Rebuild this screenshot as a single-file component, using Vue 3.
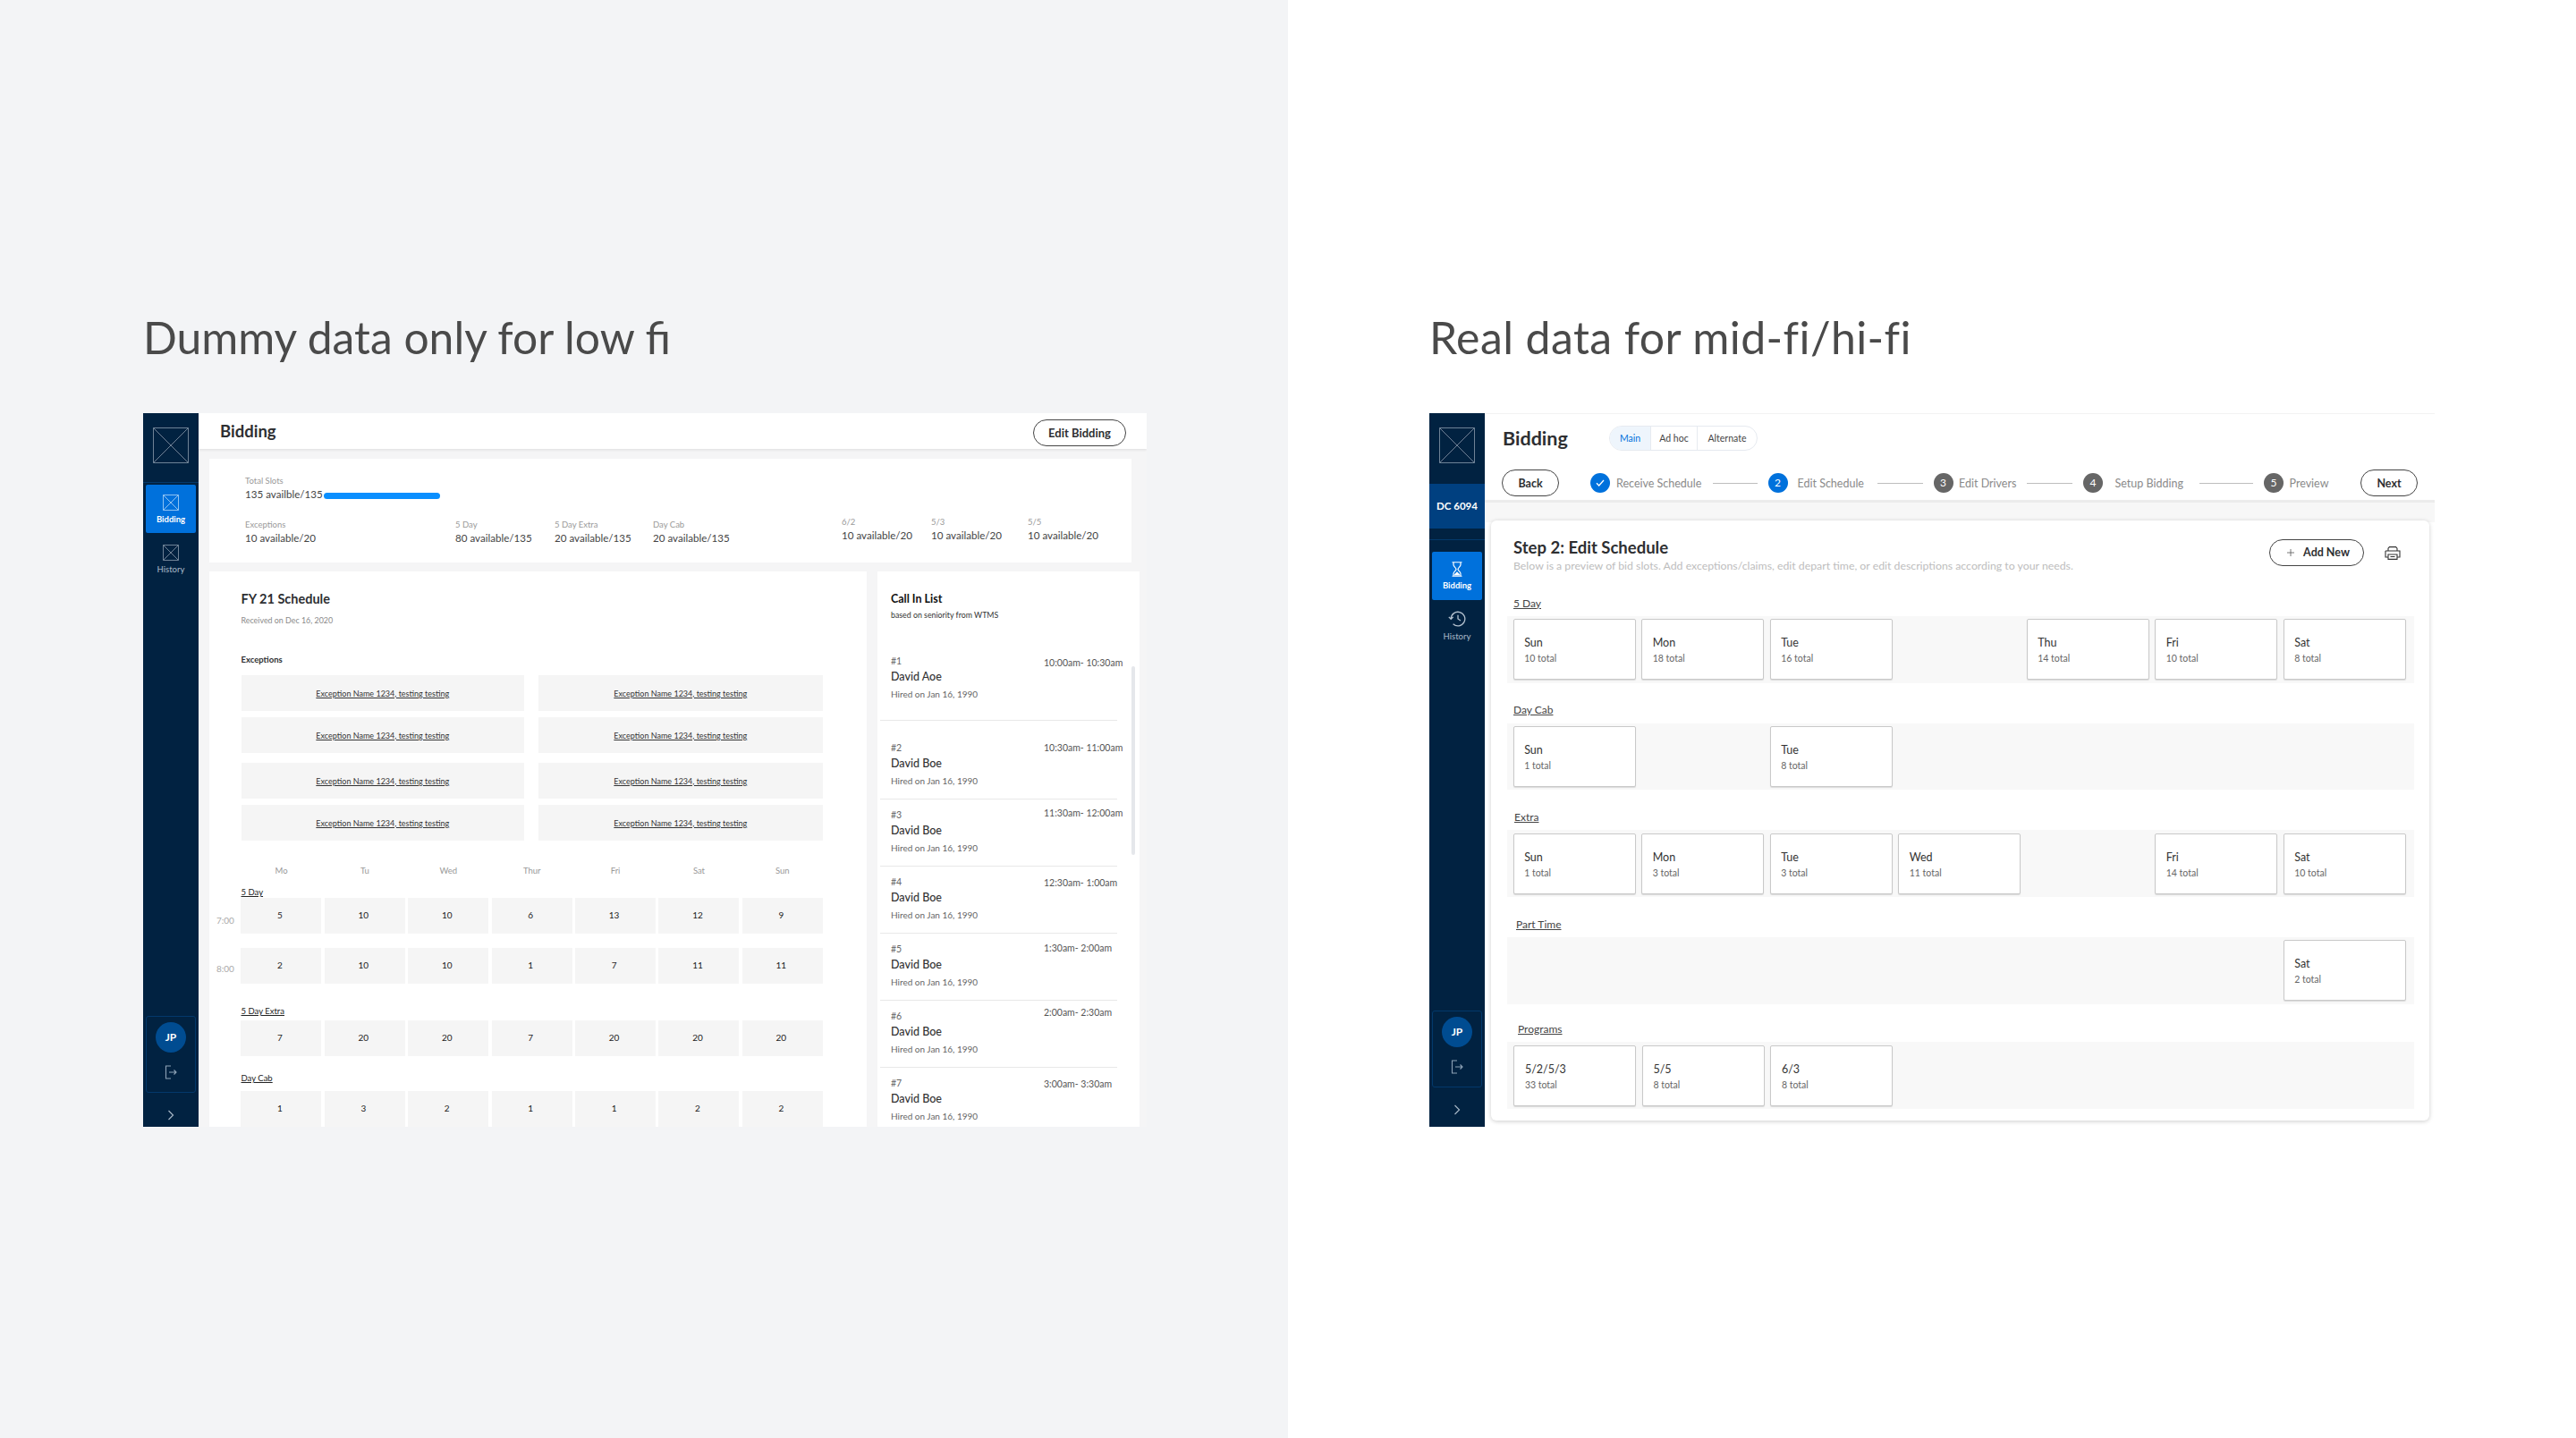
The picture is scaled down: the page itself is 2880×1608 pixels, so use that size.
<script setup>
const summary = [
  { label: '5 Day', value: '80 available/135' },
  { label: '5 Day Extra', value: '20 available/135' },
  { label: 'Day Cab', value: '20 available/135' },
  { label: '6/2', value: '10 available/20', up: true },
  { label: '5/3', value: '10 available/20', up: true },
  { label: '5/5', value: '10 available/20', up: true }
]

const exceptions = Array.from({ length: 8 }, () => 'Exception Name 1234, testing testing')
const days = ['Mo', 'Tu', 'Wed', 'Thur', 'Fri', 'Sat', 'Sun']

const callList = [
  { n: '#1', name: 'David Aoe', time: '10:00am- 10:30am', dy: 2 },
  { n: '#2', name: 'David Boe', time: '10:30am- 11:00am', dy: 0 },
  { n: '#3', name: 'David Boe', time: '11:30am- 12:00am', dy: -2 },
  { n: '#4', name: 'David Boe', time: '12:30am- 1:00am', dy: 1 },
  { n: '#5', name: 'David Boe', time: '1:30am- 2:00am', dy: -1 },
  { n: '#6', name: 'David Boe', time: '2:00am- 2:30am', dy: -4 },
  { n: '#7', name: 'David Boe', time: '3:00am- 3:30am', dy: 1 }
]

const steps = [
  { id: 1, label: 'Receive Schedule', done: true, gap: 7, w: 95, lineGap: 12.5, line: 50 },
  { id: 2, label: 'Edit Schedule', active: true, gap: 11, w: 73, lineGap: 16, line: 51 },
  { id: 3, label: 'Edit Drivers', gap: 6.5, w: 64, lineGap: 12, line: 51 },
  { id: 4, label: 'Setup Bidding', gap: 13.5, w: 75, lineGap: 19.5, line: 60 },
  { id: 5, label: 'Preview', gap: 6.5, w: 43 }
]

const d = (name, total) => ({ name, total })
const sections = [
  {
    title: '5 Day',
    inset: 7,
    slots: [d('Sun', 10), d('Mon', 18), d('Tue', 16), null, d('Thu', 14), d('Fri', 10), d('Sat', 8)]
  },
  { title: 'Day Cab', inset: 7, slots: [d('Sun', 1), null, d('Tue', 8)] },
  {
    title: 'Extra',
    inset: 8,
    slots: [d('Sun', 1), d('Mon', 3), d('Tue', 3), d('Wed', 11), null, d('Fri', 14), d('Sat', 10)]
  },
  { title: 'Part Time', inset: 10, slots: [null, null, null, null, null, null, d('Sat', 2)] },
  { title: 'Programs', inset: 12, programs: true, slots: [d('5/2/5/3', 33), d('5/5', 8), d('6/3', 8)] }
]
</script>

<template>
  <div class="page">
    <!-- low fi -->
    <section class="pane pane-left">
      <h1 class="heading">Dummy data only for low fi</h1>
      <div class="app">
        <aside class="side">
          <div class="side-logo">
            <svg class="logo" viewBox="0 0 40 40"><path d="M.5.5h39v39H.5zM.5.5l39 39M39.5.5l-39 39" /></svg>
          </div>
          <div class="nav-tile">
            <svg class="ph" viewBox="0 0 18 18"><path d="M.5.5h17v17H.5zM.5.5l17 17M17.5.5l-17 17" /></svg>
            <span>Bidding</span>
          </div>
          <div class="nav-item nav-item-low">
            <svg class="ph" viewBox="0 0 18 18"><path d="M.5.5h17v17H.5zM.5.5l17 17M17.5.5l-17 17" /></svg>
            <span>History</span>
          </div>
          <div class="side-foot">
            <div class="user-box">
              <div class="avatar">JP</div>
              <svg class="logout" viewBox="0 0 14 16"><path d="M7 1H1.5v14H7M5 8h8M10.5 5.5 13 8l-2.5 2.5" /></svg>
            </div>
            <svg class="chev" viewBox="0 0 8 12"><path d="M1.5 1 6.5 6l-5 5" /></svg>
          </div>
        </aside>

        <div class="main-low">
          <header class="low-head">
            <div class="low-title">Bidding</div>
            <button class="pill pill-edit">Edit Bidding</button>
          </header>

          <div class="summary">
            <div class="sum-label">Total Slots</div>
            <div class="sum-total">
              <span class="sum-value">135 availble/135</span>
              <span class="bar"></span>
            </div>
            <div class="sum-grid">
              <div>
                <div class="sum-label">Exceptions</div>
                <div class="sum-value">10 available/20</div>
              </div>
              <div v-for="s in summary" :key="s.label" :class="{ up: s.up }">
                <div class="sum-label">{{ s.label }}</div>
                <div class="sum-value">{{ s.value }}</div>
              </div>
            </div>
          </div>

          <div class="low-row">
            <div class="sched">
              <div class="sched-title">FY 21 Schedule</div>
              <div class="sched-sub">Received on Dec 16, 2020</div>
              <div class="sched-label">Exceptions</div>
              <div class="exc-grid">
                <div v-for="(e, i) in exceptions" :key="i" class="exc"><u>{{ e }}</u></div>
              </div>

              <div class="day-head">
                <span v-for="day in days" :key="day">{{ day }}</span>
              </div>

              <div class="grp-label first">5 Day</div>
              <div class="cells">
                <span class="time t1">7:00</span>
                <span v-for="(v, i) in [5, 10, 10, 6, 13, 12, 9]" :key="i" class="cell">{{ v }}</span>
              </div>
              <div class="cells cells-next">
                <span class="time t2">8:00</span>
                <span v-for="(v, i) in [2, 10, 10, 1, 7, 11, 11]" :key="i" class="cell">{{ v }}</span>
              </div>

              <div class="grp-label extra">5 Day Extra</div>
              <div class="cells">
                <span class="time"></span>
                <span v-for="(v, i) in [7, 20, 20, 7, 20, 20, 20]" :key="i" class="cell">{{ v }}</span>
              </div>

              <div class="grp-label cab">Day Cab</div>
              <div class="cells">
                <span class="time"></span>
                <span v-for="(v, i) in [1, 3, 2, 1, 1, 2, 2]" :key="i" class="cell">{{ v }}</span>
              </div>
            </div>

            <div class="calls">
              <div class="calls-title">Call In List</div>
              <div class="calls-sub">based on seniority from WTMS</div>
              <div class="call-list">
                <div v-for="c in callList" :key="c.n" class="call">
                  <div>
                    <div class="call-n">{{ c.n }}</div>
                    <div class="call-name">{{ c.name }}</div>
                    <div class="call-hired">Hired on Jan 16, 1990</div>
                  </div>
                  <div class="call-time" :style="{ marginTop: c.dy + 'px' }">{{ c.time }}</div>
                </div>
              </div>
              <div class="scroll-thumb"></div>
            </div>
          </div>
        </div>
      </div>
    </section>

    <!-- mid / hi fi -->
    <section class="pane pane-right">
      <h1 class="heading heading-real">Real data for mid-fi/hi-fi</h1>
      <div class="app">
        <aside class="side">
          <div class="side-logo side-logo-dc">
            <svg class="logo" viewBox="0 0 40 40"><path d="M.5.5h39v39H.5zM.5.5l39 39M39.5.5l-39 39" /></svg>
          </div>
          <div class="dc">DC 6094</div>
          <div class="side-rule"></div>
          <div class="nav-tile">
            <svg class="hourglass" viewBox="0 0 12 17">
              <path class="hg-line" d="M.5 .75h11M.5 16.25h11M2 1v2.6c0 2.2 3 3.2 3 4.9s-3 2.7-3 4.9V16M10 1v2.6c0 2.2-3 3.2-3 4.9s3 2.7 3 4.9V16" />
              <path class="hg-fill" d="M2.6 15.6c.3-1.8 2.2-2.8 3.4-4.3 1.2 1.5 3.1 2.5 3.4 4.3z" />
            </svg>
            <span>Bidding</span>
          </div>
          <div class="nav-item">
            <svg class="clock" viewBox="0 0 20 18">
              <path d="M3.2 9a7.8 7.8 0 1 1 2.4 5.7M.8 6.9 3.2 9.4l2.5-2.5M11 4.8V9l3 2" />
            </svg>
            <span>History</span>
          </div>
          <div class="side-foot side-foot-dc">
            <div class="user-box">
              <div class="avatar">JP</div>
              <svg class="logout" viewBox="0 0 14 16"><path d="M7 1H1.5v14H7M5 8h8M10.5 5.5 13 8l-2.5 2.5" /></svg>
            </div>
            <svg class="chev" viewBox="0 0 8 12"><path d="M1.5 1 6.5 6l-5 5" /></svg>
          </div>
        </aside>

        <div class="main-hi">
          <header class="hi-head">
            <div class="hi-top">
              <div class="hi-title">Bidding</div>
              <div class="tabs">
                <span class="tab tab-on">Main</span>
                <span class="tab tab-mid">Ad hoc</span>
                <span class="tab tab-end">Alternate</span>
              </div>
            </div>
            <div class="stepper">
              <button class="pill pill-back">Back</button>
              <div class="steps">
                <template v-for="s in steps" :key="s.id">
                  <span class="dot" :class="{ blue: s.done || s.active }">
                    <svg v-if="s.done" class="check" viewBox="0 0 10 8"><path d="M1 4.2 3.7 7 9 1" /></svg>
                    <template v-else>{{ s.id }}</template>
                  </span>
                  <span class="step-label" :style="{ marginLeft: s.gap + 'px', width: s.w + 'px' }">{{ s.label }}</span>
                  <span v-if="s.line" class="step-line" :style="{ marginLeft: s.lineGap + 'px', width: s.line + 'px' }"></span>
                </template>
              </div>
              <button class="pill pill-next">Next</button>
            </div>
          </header>

          <div class="hi-body">
            <div class="hi-card">
              <div class="card-head">
                <div>
                  <div class="card-title">Step 2: Edit Schedule</div>
                  <div class="card-sub">Below is a preview of bid slots. Add exceptions/claims, edit depart time, or edit descriptions according to your needs.</div>
                </div>
                <div class="card-actions">
                  <button class="pill pill-add">
                    <svg class="plus" viewBox="0 0 10 10"><path d="M5 0v10M0 5h10" /></svg>
                    Add New
                  </button>
                  <svg class="printer" viewBox="0 0 18 15">
                    <path d="M4 5V2.2L5.4.6h7.2L14 2.2V5M1 5h16v7h-3M4 12H1V5M4 9h10v5.4H4zM6.5 11.5h5" />
                  </svg>
                </div>
              </div>

              <div v-for="sec in sections" :key="sec.title" class="sec" :class="{ 'sec-programs': sec.programs }">
                <div class="sec-title" :style="{ paddingLeft: sec.inset + 'px' }"><u>{{ sec.title }}</u></div>
                <div class="band">
                  <template v-for="(slot, i) in sec.slots" :key="i">
                    <div v-if="slot" class="slot">
                      <div class="slot-name">{{ slot.name }}</div>
                      <div class="slot-total">{{ slot.total }} total</div>
                    </div>
                    <div v-else></div>
                  </template>
                </div>
              </div>
            </div>
          </div>
        </div>
      </div>
    </section>
  </div>
</template>

<style scoped>
.page {
  display: grid;
  grid-template-columns: 1440px 1440px;
  width: 2880px;
  height: 1608px;
  overflow: hidden;
  font-family: Lato, "Open Sans", sans-serif;
  color: #2e2f32;
}

.pane {
  padding-top: 347px;
  box-sizing: border-box;
}

.pane-left {
  background: #f3f4f6;
  padding-left: 160px;
}

.pane-right {
  background: #fff;
  padding-left: 158px;
}

.heading {
  margin: 0 0 55px;
  height: 60px;
  font-size: 49.8px;
  line-height: 60px;
  font-weight: 400;
  color: #4a4a4a;
  white-space: nowrap;
}

.heading-real {
  font-size: 50px;
  letter-spacing: 0.4px;
}

.app {
  display: flex;
  height: 798px;
  overflow: hidden;
}

.pane-left .app {
  width: 1122px;
}

.pane-right .app {
  width: 1124px;
}

/* sidebar */
.side {
  width: 62px;
  flex: none;
  display: flex;
  flex-direction: column;
  background: #012241;
  color: #fff;
}

.side-logo {
  height: 78px;
  display: flex;
  justify-content: center;
  padding-top: 16px;
  box-sizing: border-box;
  border-bottom: 1px solid #04396b;
  margin-bottom: 2px;
}

.side-logo-dc {
  border-bottom: 0;
  margin-bottom: 1px;
}

.logo {
  width: 40px;
  height: 40px;
}

.logo path,
.ph path {
  fill: none;
  stroke: #6f8296;
  stroke-width: 1;
}

.dc {
  height: 50px;
  line-height: 50px;
  text-align: center;
  background: #004080;
  font-size: 11.5px;
  font-weight: 700;
}

.side-rule {
  height: 1px;
  margin: 12px 0 13px;
  background: #04396b;
}

.nav-tile,
.nav-item {
  margin: 0 3px;
  height: 54px;
  box-sizing: border-box;
  display: flex;
  flex-direction: column;
  align-items: center;
  font-size: 9.5px;
  line-height: 12px;
}

.nav-tile {
  padding-top: 11px;
  background: #0071dc;
  border-radius: 2px;
  font-weight: 700;
}

.nav-tile .ph path {
  stroke: #8fc2f2;
}

.nav-item {
  padding-top: 12px;
  color: #9fb0c0;
  font-weight: 500;
}

.nav-item-low {
  padding-top: 13px;
}

.ph {
  width: 18px;
  height: 18px;
  margin-bottom: 4px;
}

.hourglass {
  width: 12px;
  height: 17px;
  margin-bottom: 4px;
}

.hg-line {
  fill: none;
  stroke: #fff;
  stroke-width: 1.2;
}

.hg-fill {
  fill: #fff;
}

.clock {
  width: 20px;
  height: 18px;
  margin-bottom: 5px;
}

.clock path {
  fill: none;
  stroke: #b5c2cf;
  stroke-width: 1.3;
}

.side-foot {
  margin-top: auto;
  display: flex;
  flex-direction: column;
  align-items: center;
}

.side-foot-dc {
  padding-bottom: 6px;
}

.user-box {
  width: 56px;
  height: 86px;
  box-sizing: border-box;
  border: 1px solid #03386b;
  border-radius: 3px;
  padding-top: 6px;
  display: flex;
  flex-direction: column;
  align-items: center;
}

.avatar {
  width: 34px;
  height: 34px;
  border-radius: 50%;
  background: #004c91;
  text-align: center;
  line-height: 34px;
  font-size: 12px;
  font-weight: 700;
}

.logout {
  width: 14px;
  height: 16px;
  margin-top: 14px;
}

.logout path {
  fill: none;
  stroke: #8fa3b7;
  stroke-width: 1.1;
}

.chev {
  width: 8px;
  height: 12px;
  margin: 19px 0 7px;
}

.chev path {
  fill: none;
  stroke: #a5b5c5;
  stroke-width: 1.2;
}

/* pills */
.pill {
  height: 30px;
  border: 1px solid #444;
  border-radius: 15px;
  background: #fff;
  font-family: inherit;
  font-weight: 700;
  font-size: 13px;
  color: #2e2f32;
  padding: 0;
  flex: none;
}

.pill-edit {
  width: 104px;
  margin-top: 4px;
}

.pill-back {
  width: 64px;
  font-size: 12.5px;
}

.pill-next {
  width: 64px;
  margin-left: auto;
  font-size: 12.5px;
}

.pill-add {
  width: 106px;
  display: flex;
  align-items: center;
  justify-content: center;
  gap: 10px;
  padding-left: 4px;
  font-size: 12.5px;
}

/* low fi main */
.main-low {
  flex: 1;
  min-width: 0;
  background: #f5f5f6;
}

.low-head {
  height: 40px;
  background: #fff;
  display: flex;
  align-items: center;
  justify-content: space-between;
  padding: 0 23px 0 24px;
  box-shadow: 0 1px 3px rgba(0, 0, 0, 0.1);
  position: relative;
}

.low-title {
  font-size: 18.5px;
  font-weight: 700;
}

.summary {
  width: 1031px;
  height: 116px;
  box-sizing: border-box;
  margin: 11px 0 10px 12px;
  padding: 19px 0 0 40px;
  background: #fff;
}

.sum-label {
  font-size: 9.5px;
  line-height: 12px;
  color: #9a9a9a;
}

.sum-value {
  font-size: 11.6px;
  line-height: 18px;
  color: #444;
  white-space: nowrap;
}

.sum-total {
  display: flex;
  align-items: center;
  gap: 1.5px;
}

.bar {
  width: 130px;
  height: 7px;
  margin-top: 3px;
  border-radius: 4px;
  background: #0a8fff;
}

.sum-grid {
  display: grid;
  grid-template-columns: 235px 111px 110px 211px 100px 108px auto;
  margin-top: 19px;
}

.up {
  margin-top: -3px;
}

.low-row {
  display: flex;
  gap: 12px;
  margin-left: 12px;
}

.sched {
  width: 735px;
  height: 621px;
  box-sizing: border-box;
  padding: 21px 0 0 35.5px;
  background: #fff;
  overflow: hidden;
}

.sched-title {
  font-size: 14.5px;
  line-height: 20px;
  font-weight: 700;
}

.sched-sub {
  margin-top: 7px;
  font-size: 8.9px;
  line-height: 14px;
  color: #8a8a8a;
}

.sched-label {
  margin-top: 31px;
  font-size: 9.5px;
  line-height: 12px;
  font-weight: 700;
}

.exc-grid {
  display: grid;
  grid-template-columns: 316.5px 317.5px;
  column-gap: 16px;
  row-gap: 7px;
  margin-top: 11px;
}

.exc {
  height: 40px;
  background: #f5f5f5;
  display: flex;
  align-items: center;
  justify-content: center;
  font-size: 9px;
  color: #333;
}

.exc:nth-child(5),
.exc:nth-child(6) {
  margin-top: 4px;
}

.day-head {
  display: grid;
  grid-template-columns: repeat(7, 90px);
  column-gap: 3.4px;
  margin-top: 27px;
  font-size: 9.5px;
  line-height: 14px;
  color: #999;
  text-align: center;
}

.grp-label {
  font-size: 9.5px;
  line-height: 12px;
  color: #222;
  text-decoration: underline;
}

.first {
  margin-top: 11px;
}

.extra {
  margin-top: 25px;
  margin-bottom: 4px;
}

.cab {
  margin-top: 19px;
  margin-bottom: 8px;
}

.cells {
  display: grid;
  grid-template-columns: 24.1px repeat(7, 90px);
  column-gap: 3.4px;
  margin-left: -27.5px;
}

.cells-next {
  margin-top: 16px;
}

.cell {
  height: 40px;
  padding-right: 3px;
  box-sizing: border-box;
  background: #f5f5f5;
  text-align: center;
  font-size: 10px;
  line-height: 38px;
  color: #222;
}

.time {
  font-size: 10px;
  line-height: 12px;
  color: #aaa;
}

.t1 {
  padding-top: 19px;
}

.t2 {
  padding-top: 17px;
}

.calls {
  position: relative;
  width: 293px;
  height: 621px;
  box-sizing: border-box;
  padding: 22px 0 0 15px;
  background: #fff;
  overflow: hidden;
}

.calls-title {
  font-size: 12.5px;
  line-height: 18px;
  font-weight: 700;
  color: #111;
}

.calls-sub {
  margin-top: 3px;
  font-size: 8.8px;
  line-height: 12px;
  color: #333;
}

.call-list {
  width: 265px;
  margin: 38px 0 0 -12px;
}

.call {
  display: grid;
  grid-template-columns: 171px auto;
  padding: 10px 0 11px 12px;
  border-bottom: 1px solid #e8e8e8;
}

.call:first-child {
  padding-top: 0;
  padding-bottom: 19.5px;
}

.call:nth-child(2) {
  padding-top: 23px;
}

.call-n {
  font-size: 10.5px;
  line-height: 14px;
  color: #666;
}

.call-name {
  margin-top: 2px;
  font-size: 12.5px;
  line-height: 18px;
  font-weight: 500;
  color: #333;
}

.call-hired {
  margin-top: 1px;
  font-size: 10px;
  line-height: 18px;
  color: #666;
}

.call-time {
  font-size: 10.5px;
  line-height: 14px;
  color: #555;
  white-space: nowrap;
}

.scroll-thumb {
  position: absolute;
  top: 106px;
  right: 5px;
  width: 4px;
  height: 211px;
  border-radius: 2px;
  background: #e5e7eb;
}

/* mid / hi fi main */
.main-hi {
  flex: 1;
  min-width: 0;
  background: linear-gradient(#f7f7f7 22px, #fff 22px);
  background-position: 0 100px;
  background-repeat: no-repeat;
}

.hi-head {
  height: 100px;
  box-sizing: border-box;
  padding: 13px 19px 0 19px;
  background: #fff;
  border-top: 1px solid #f2f2f2;
  border-bottom: 3px solid #ececec;
}

.hi-top {
  display: flex;
  align-items: center;
  height: 28px;
}

.hi-title {
  width: 120px;
  padding-left: 1px;
  box-sizing: border-box;
  font-size: 21.5px;
  font-weight: 700;
}

.tabs {
  display: flex;
  height: 28px;
  box-sizing: border-box;
  border: 1px solid #e6eaf0;
  border-radius: 14px;
  overflow: hidden;
  font-size: 10.5px;
  line-height: 26px;
  text-align: center;
}

.tab {
  color: #444;
}

.tab-on {
  width: 45px;
  background: #eef5fc;
  color: #0071dc;
  border-right: 1px solid #e6eaf0;
}

.tab-mid {
  width: 51px;
  border-right: 1px solid #e6eaf0;
}

.tab-end {
  width: 66px;
}

.stepper {
  display: flex;
  align-items: center;
  margin-top: 21px;
}

.steps {
  display: flex;
  align-items: center;
  margin-left: 35px;
}

.dot {
  width: 22px;
  height: 22px;
  flex: none;
  border-radius: 50%;
  background: #666;
  color: #fff;
  text-align: center;
  font-size: 12px;
  line-height: 22px;
  display: flex;
  align-items: center;
  justify-content: center;
}

.dot.blue {
  background: #0071dc;
}

.check {
  width: 10px;
  height: 8px;
}

.check path {
  fill: none;
  stroke: #fff;
  stroke-width: 1.3;
}

.step-label {
  font-size: 12.5px;
  color: #8a8a8a;
  white-space: nowrap;
}

.step-line {
  height: 1px;
  margin-right: 12px;
  background: #bdbdbd;
}

.hi-body {
  padding: 20px 6.5px 0 6.5px;
}

.hi-card {
  height: 671px;
  box-sizing: border-box;
  padding: 18.5px 16.5px 0 18.5px;
  background: #fff;
  border-radius: 6px;
  box-shadow: 0 1px 5px rgba(0, 0, 0, 0.2);
}

.card-head {
  display: flex;
  justify-content: space-between;
  height: 66px;
  padding-left: 7px;
}

.card-title {
  font-size: 18.5px;
  line-height: 22px;
  font-weight: 700;
}

.card-sub {
  margin-top: 2px;
  font-size: 12.3px;
  line-height: 16px;
  color: #bdbdbd;
  white-space: nowrap;
}

.card-actions {
  display: flex;
  align-items: flex-start;
  gap: 23px;
  margin: 2px 15px 0 0;
}

.plus {
  width: 8px;
  height: 8px;
}

.plus path {
  stroke: #555;
  stroke-width: 1;
}

.printer {
  width: 18px;
  height: 15px;
  margin-top: 8px;
}

.printer path {
  fill: none;
  stroke: #333;
  stroke-width: 1.1;
}

.sec {
  margin-bottom: 22.5px;
}

.sec-programs {
  margin-top: -2.5px;
}

.sec-title {
  height: 16px;
  margin-bottom: 6.5px;
  font-size: 12px;
  line-height: 16px;
  color: #444;
}

.band {
  display: grid;
  grid-template-columns: repeat(7, 137px);
  column-gap: 6.5px;
  height: 74.7px;
  box-sizing: border-box;
  padding: 3.4px 0 0 6.7px;
  background: #f8f8f8;
}

.sec-programs .band {
  padding-left: 7.4px;
}

.slot {
  height: 68px;
  box-sizing: border-box;
  padding: 18px 0 0 11.5px;
  background: #fff;
  border: 1px solid #c9c9c9;
  border-radius: 2px;
  box-shadow: 0 1px 1px rgba(0, 0, 0, 0.12);
}

.slot-name {
  font-size: 12.5px;
  line-height: 16px;
  color: #333;
}

.slot-total {
  margin-top: 2px;
  font-size: 10.5px;
  line-height: 14px;
  color: #666;
}
</style>

<style>
html,
body {
  margin: 0;
  background: #fff;
}
</style>
